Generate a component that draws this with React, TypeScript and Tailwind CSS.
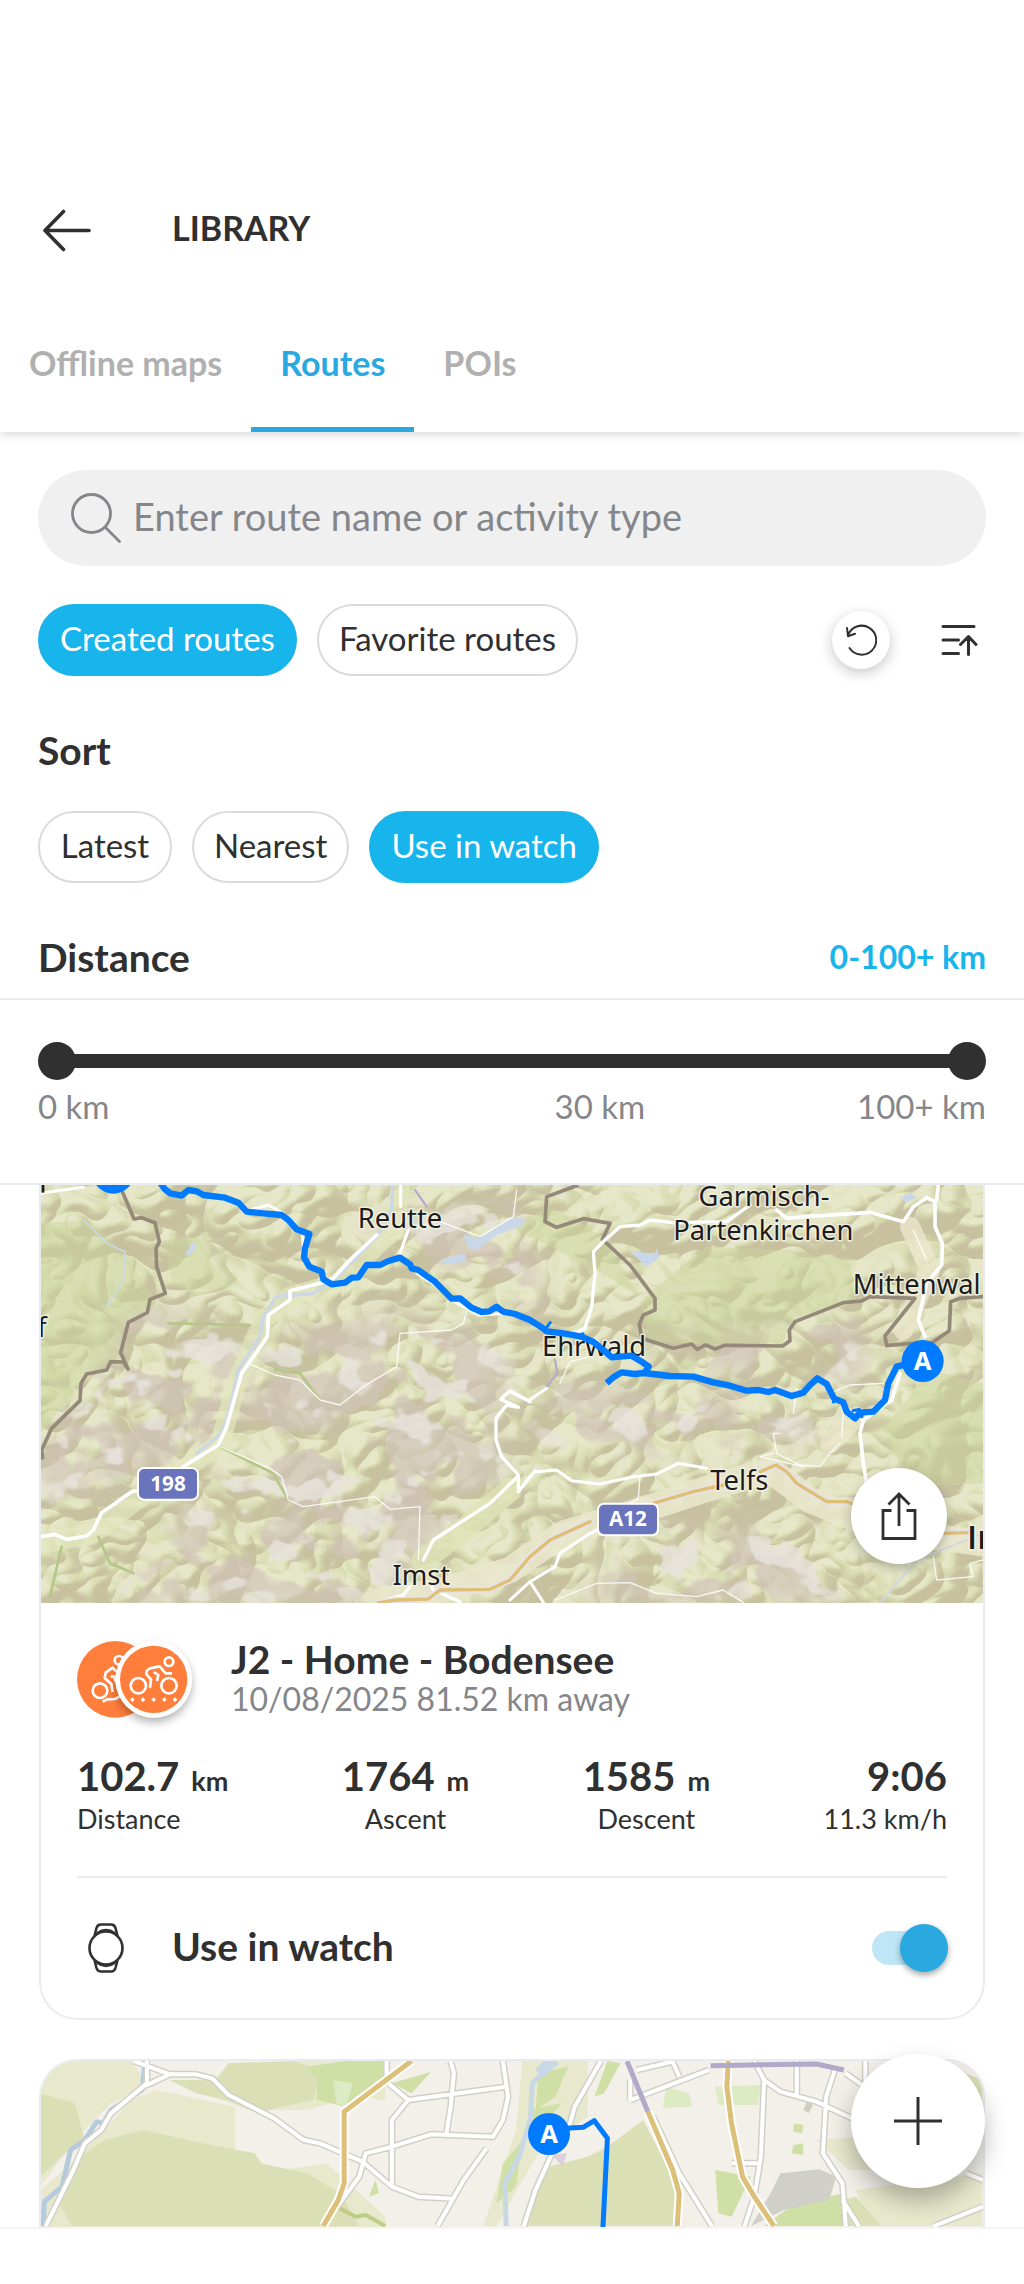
import React, { useState } from 'react';

const TABS = ['Offline maps', 'Routes', 'POIs'];
const SOURCES = ['Created routes', 'Favorite routes'];
const SORTS = ['Latest', 'Nearest', 'Use in watch'];

const STATS = [
  { value: '102.7', unit: 'km', label: 'Distance', align: 'text-left' },
  { value: '1764', unit: 'm', label: 'Ascent', align: 'text-center' },
  { value: '1585', unit: 'm', label: 'Descent', align: 'text-center' },
  { value: '9:06', unit: '', label: '11.3 km/h', align: 'text-right' },
];

interface ChipProps {
  label: string;
  active: boolean;
  onClick: () => void;
}

function Chip({ label, active, onClick }: ChipProps) {
  return (
    <button
      type="button"
      aria-pressed={active}
      onClick={onClick}
      className={`h-[72px] min-w-[134px] px-5 pb-1 rounded-full border-2 text-[33px] leading-10 whitespace-nowrap ${
        active ? 'bg-[#18b4ec] border-[#18b4ec] text-white' : 'bg-white border-[#d8dcdf] text-[#303030]'
      }`}
    >
      {label}
    </button>
  );
}

function Header() {
  const [tab, setTab] = useState('Routes');

  return (
    <header className="relative bg-white pt-[170px] shadow-[0_2px_10px_rgba(0,0,0,0.18)]">
      <div className="flex items-center h-[120px] pl-[42px]">
        <button type="button" aria-label="Back">
          <svg width="50" height="43" viewBox="0 0 50 43" fill="none" stroke="#303030" strokeWidth="3.600" strokeLinecap="round" strokeLinejoin="round">
            <path d="M47 21.500H3M21.500 2.500L3 21.500l18.500 19" />
          </svg>
        </button>
        <h1 className="ml-20 pb-1 text-[34px] leading-10 font-bold text-[#303030]">LIBRARY</h1>
      </div>
      <nav className="flex">
        {TABS.map((t) => (
          <button
            key={t}
            type="button"
            onClick={() => setTab(t)}
            className={`relative h-[142px] px-[29px] pt-1 text-[34px] leading-10 font-bold ${
              t === tab ? 'text-[#2aa9e0]' : 'text-[#b0b0b0]'
            }`}
          >
            {t}
            {t === tab && <span className="absolute inset-x-0 bottom-0 h-[5px] bg-[#2aa9e0]" />}
          </button>
        ))}
      </nav>
    </header>
  );
}

function DistanceSlider() {
  const [low, setLow] = useState(0);
  const [high, setHigh] = useState(100);
  const range =
    'absolute inset-0 w-full h-[38px] appearance-none bg-transparent pointer-events-none [&::-webkit-slider-thumb]:appearance-none [&::-webkit-slider-thumb]:pointer-events-auto [&::-webkit-slider-thumb]:size-[38px] [&::-webkit-slider-thumb]:rounded-full [&::-webkit-slider-thumb]:bg-[#303030]';

  return (
    <div className="border-y-2 border-[#e8ecef] px-[38px] pt-[42px] pb-[55px]">
      <div className="relative flex items-center h-[38px]">
        <div className="h-[14px] mx-4 flex-1 bg-[#303030]" />
        <input type="range" aria-label="Minimum distance" min={0} max={100} value={low} onChange={(e) => setLow(Math.min(+e.target.value, high))} className={range} />
        <input type="range" aria-label="Maximum distance" min={0} max={100} value={high} onChange={(e) => setHigh(Math.max(+e.target.value, low))} className={range} />
      </div>
      <div className="mt-1 flex text-[33px] leading-[44px] text-[#85868a]">
        <span>0 km</span>
        <span className="grow-[21]" />
        <span>30 km</span>
        <span className="grow-[10]" />
        <span>100+ km</span>
      </div>
    </div>
  );
}

function Marker({ x, y, r }: { x: number; y: number; r: number }) {
  return (
    <g>
      <circle cx={x} cy={y} r={r} fill="#007aff" />
      <text x={x} y={y + r * 0.42} textAnchor="middle" fontFamily="'Noto Sans', sans-serif" fontWeight="700" fontSize={r * 1.22} fill="#fff">
        A
      </text>
    </g>
  );
}

function Shield({ x, y, label }: { x: number; y: number; label: string }) {
  return (
    <g>
      <rect x={x} y={y} width="180" height="95" rx="18" fill="#6974bd" stroke="#fff" strokeWidth="6" />
      <text x={x + 90} y={y + 68} textAnchor="middle" fontFamily="'Open Sans', sans-serif" fontWeight="700" fontSize="62" fill="#fff">
        {label}
      </text>
    </g>
  );
}

function AlpsMap() {
  return (
    <svg className="block w-full h-[418px]" viewBox="33 45 2826 1254" preserveAspectRatio="xMidYMid slice" role="img" aria-label="Route map">
      <defs>
        <filter id="relief" x="0" y="0" width="100%" height="100%" colorInterpolationFilters="sRGB">
          <feTurbulence type="turbulence" baseFrequency="0.0032 0.0038" numOctaves="3" seed="14" />
          <feDiffuseLighting surfaceScale="120" diffuseConstant="1.05" lightingColor="#fff">
            <feDistantLight azimuth="235" elevation="55" />
          </feDiffuseLighting>
          <feComponentTransfer>
            <feFuncR type="discrete" tableValues=".77 .77 .77 .78 .79 .80 .82 .84 .86 .87 .89 .91" />
            <feFuncG type="discrete" tableValues=".74 .74 .74 .75 .77 .79 .82 .85 .87 .88 .90 .91" />
            <feFuncB type="discrete" tableValues=".62 .62 .62 .63 .65 .65 .67 .69 .71 .73 .77 .80" />
          </feComponentTransfer>
        </filter>
        <filter id="rock" x="0" y="0" width="100%" height="100%" colorInterpolationFilters="sRGB">
          <feTurbulence type="fractalNoise" baseFrequency="0.0055 0.0065" numOctaves="3" seed="5" />
          <feColorMatrix values="0 0 0 0 .82  0 0 0 0 .765  0 0 0 0 .72  16 0 0 0 -7.6" />
        </filter>
        <filter id="snow" x="0" y="0" width="100%" height="100%" colorInterpolationFilters="sRGB">
          <feTurbulence type="fractalNoise" baseFrequency="0.008 0.010" numOctaves="3" seed="31" />
          <feColorMatrix values="0 0 0 0 .91  0 0 0 0 .89  0 0 0 0 .87  0 14 0 0 -8.3" />
        </filter>
        <filter id="soft" x="-20%" y="-20%" width="140%" height="140%">
          <feGaussianBlur stdDeviation="35" />
        </filter>
        <mask id="peaks">
          <g fill="#fff" filter="url(#soft)">
            <path d="M300 400L650 480L620 640L560 830L300 930L33 1020V860L180 620Z" />
            <path d="M700 500L1100 420L1440 520V640L1380 760L1440 900L1180 1150L1050 1299H250L500 1000L620 860Z" />
            <path d="M980 150L1440 90L1560 440L1200 260Z" />
            <path d="M1580 640L2250 700L2420 800L1880 850L1480 820Z" />
            <path d="M1850 1100L2300 1060L2500 1299H1640Z" />
            <path d="M1850 500L2500 420V640L1900 590Z" />
          </g>
        </mask>
      </defs>
      <rect x="33" y="45" width="2826" height="1254" fill="#dcdeb2" />
      <rect x="33" y="45" width="2826" height="1254" filter="url(#relief)" opacity=".85" />
      <g mask="url(#peaks)">
        <rect x="33" y="45" width="2826" height="1254" filter="url(#rock)" opacity=".7" />
        <rect x="33" y="45" width="2826" height="1254" filter="url(#snow)" opacity=".8" />
      </g>

      {/* forests and valley floors */}
      <g fill="#cbd79b" opacity=".45">
        <path d="M33 160L180 150L290 260L380 400L290 450L260 560L150 640L33 790Z" />
        <path d="M400 210L500 200L560 300L600 350L540 360L430 350Z" />
        <path d="M1830 400L1880 350L2030 230L2280 240L2460 280L2480 400L2280 450L2260 520L1860 520Z" />
        <path d="M2560 780L2700 600L2859 640V940L2640 950Z" />
        <path d="M1440 170L1560 110L1720 200L1830 380L1700 300Z" />
      </g>
      <g fill="none" strokeLinecap="round" strokeLinejoin="round">
        <path d="M45 1120L190 1090L320 990L460 900L570 820L620 640L700 450L780 380L920 340L1090 180L1110 60" stroke="#e3e7bd" strokeWidth="60" opacity=".7" />
        <path d="M1060 1290L1240 1260L1440 1200L1600 1090L1900 1000L2050 950L2220 900L2340 990L2560 1080L2859 1120" stroke="#eae8cc" strokeWidth="78" opacity=".85" />
        <path d="M2640 170L2700 300L2620 480M2480 740L2400 820" stroke="#ebe6cb" strokeWidth="60" opacity=".8" />
        <path d="M1180 1170L1300 1080L1440 960" stroke="#dfe4b6" strokeWidth="70" opacity=".8" />
        <path d="M570 830L730 910L775 990M415 460L660 465M205 1100L240 1180L310 1210M735 600L810 610L870 690M60 1280L95 1130" stroke="#b5c787" strokeWidth="8" />
      </g>

      {/* water */}
      <g fill="none" stroke="#ccd8e3" strokeLinecap="round" strokeLinejoin="round">
        <path d="M1088 50L1085 120L1040 200L980 260L910 330L850 370L740 380L700 440L690 500L625 600L600 720L575 790L500 850" strokeWidth="11" />
        <path d="M160 150L230 220L285 245L280 330L230 410" strokeWidth="5" />
        <path d="M2860 1090L2660 1170L2550 1299" strokeWidth="5" />
        <path d="M1155 60L1190 110M1575 570L1582 610L1550 650" stroke="#b3adc8" strokeWidth="7" />
      </g>
      <g fill="#c9d7e8">
        <path d="M1300 195L1350 205L1440 145L1485 145L1480 165L1400 195L1340 240L1315 235Z" />
        <path d="M1230 270L1305 250L1310 275L1245 283Z" />
        <path d="M465 255L488 215L500 230L480 255Z" />
        <path d="M1800 245L1875 250L1880 235L1888 265L1850 290Z" />
        <path d="M2610 85L2640 68L2660 82L2630 97Z" />
      </g>

      {/* national border */}
      <g fill="none" stroke="#95897a" strokeWidth="11" strokeLinejoin="round">
        <path d="M275 60L312 147L335 143L375 158L388 215L378 235L380 290L406 370L360 388L352 428L295 457L272 548L294 597L280 576L242 575L230 600L170 612L153 640L150 692L65 775L35 840L38 868" />
        <path d="M1645 45L1550 80L1545 155L1580 172L1660 146L1740 160L1717 208L1800 285L1875 385V420L1840 435L1828 462L1835 505L1930 535L1985 522L2002 538L2026 525L2055 537L2085 526L2258 528L2280 512L2278 480L2295 455L2440 398L2495 393L2520 380L2655 385L2565 498L2570 527L2640 520L2700 523L2758 482L2762 395L2790 385L2859 380" />
      </g>

      {/* roads */}
      <g fill="none" stroke="#fff" strokeLinecap="round" strokeLinejoin="round">
        <path d="M33 1100L75 1093L110 1108L170 1098L190 1080L215 1028L305 965L330 960M460 890L565 825L590 770L615 680L635 610L712 500L715 435L780 390V362L870 340L910 325L960 270L1040 195" strokeWidth="11" />
        <path d="M33 70L120 57L160 52M1112 45V110M1135 180L1110 250M1160 310L1215 345L1265 390L1345 435L1440 430M640 125L715 105L760 130M818 190L820 250" strokeWidth="9" />
        <path d="M1500 695L1440 662L1412 688L1465 712L1430 705L1398 745V810L1415 860L1465 915V965L1500 920L1517 902M1465 918L1380 1000L1210 1110L1180 1170M1195 1235L1210 1260L1290 1295M1140 1250L1120 1275L1045 1297" strokeWidth="10" />
        <path d="M1440 665L1495 692L1550 655M1517 905L1580 900L1625 932L1710 942L1810 920L1880 912L1945 880L2030 895M1860 1010L1680 1090L1590 1150L1575 1190L1500 1235L1440 1290M1500 1235L1540 1297" strokeWidth="9" />
        <path d="M2160 105L2090 155L1930 158L1860 150L1830 165L1770 170L1725 210L1690 245L1695 310L1685 410L1665 475L1635 490" strokeWidth="10" />
        <path d="M2240 120L2270 145L2330 140L2520 127L2620 155L2650 110L2690 83L2715 95V170L2737 220L2735 285L2690 340L2665 450L2685 500M2725 45L2720 90M2610 610L2585 690L2500 750L2490 790L2500 880L2510 940" strokeWidth="11" />
        <path d="M1310 425L1300 460L1265 480L1110 490L1100 590L1000 650L930 705L870 690L810 630L735 615L655 580M570 830L720 895L755 920L775 990L820 1010L1035 980L1080 1018L1170 1010L1165 1170M1590 640L1620 575L1680 560M2430 820L2400 850L2370 890L2310 885L2240 850L2230 790L2250 790M2440 720L2435 800M2230 850L2190 860L2320 890M2300 655L2290 730M2400 670L2460 645L2560 640M2650 180L2690 270M1460 60L1450 140L1350 200L1230 155M1575 1290L1700 1240L1800 1238L1880 1270L2000 1280L2080 1260L2140 1297M1830 920L1825 985L1800 1000M2859 1170L2820 1180L2830 1220L2720 1230L2710 1160" strokeWidth="4" opacity=".85" />
        <path d="M1045 1299L1100 1290L1195 1287L1230 1260L1380 1258L1440 1230L1500 1160L1560 1110L1680 1055M1870 1000L1990 965L2080 945M2190 905L2238 885L2270 905L2300 940L2390 995H2450L2490 1010M2730 1090L2820 1088" stroke="#e6e2e6" strokeWidth="20" />
        <path d="M1045 1299L1100 1290L1195 1287L1230 1260L1380 1258L1440 1230L1500 1160L1560 1110L1680 1055M1870 1000L1990 965L2080 945M2190 905L2238 885L2270 905L2300 940L2390 995H2450L2490 1010M2730 1090L2820 1088" stroke="#dfbf74" strokeWidth="10" />
      </g>

      <g fontFamily="'Noto Sans', sans-serif" fontSize="82" fill="#1c1c1c" stroke="#f4f3e6" strokeWidth="9" strokeOpacity=".85" strokeLinejoin="round" paintOrder="stroke" textAnchor="middle">
        <text x="1110" y="173">Reutte</text>
        <text x="2202" y="108">Garmisch-</text>
        <text x="2200" y="211">Partenkirchen</text>
        <text x="2660" y="371">Mittenwal</text>
        <text x="1692" y="559">Ehrwald</text>
        <text x="2128" y="961">Telfs</text>
        <text x="1174" y="1244">Imst</text>
        <text x="36" y="502">f</text>
        <text x="2811" y="1137" textAnchor="start" fontFamily="'Open Sans', sans-serif" fontWeight="600" fontSize="100">Inn</text>
      </g>
      <path d="M39 45V68" stroke="#1c1c1c" strokeWidth="8" />
      <Shield x={324} y={894} label="198" />
      <Shield x={1704} y={1001} label="A12" />

      <g fill="none" stroke="#007aff" strokeWidth="19" strokeLinejoin="round">
        <path d="M392 40L405 58L420 70L455 77L475 60L500 64L520 75L585 83L625 98L650 125L700 130L755 135L775 150L800 178L838 192L825 235L822 262L838 290L875 305L880 328L905 343L945 338L965 323L985 322L1010 285L1050 285L1075 273L1110 263L1140 283L1145 295L1165 300L1190 318L1215 335L1265 386L1290 385L1325 413L1355 426L1378 424L1400 410L1420 425L1455 432L1500 450L1535 472L1550 484L1600 490L1655 500L1690 516L1720 540L1745 562L1805 557L1835 575L1856 590L1842 611" />
        <path d="M1730 639L1750 622L1775 607L1815 612L1842 609L1920 618L1990 620L2050 637L2100 647L2150 662L2185 660L2215 666L2235 660L2285 678L2320 668L2340 645L2362 625L2390 642L2412 685L2440 697L2450 725L2475 745L2490 728L2530 725L2565 690L2575 640L2600 590L2640 580" />
        <path d="M1545 478L1563 455M1655 500L1660 488M2412 685L2410 700M2475 735L2500 740M2466 722L2492 718" strokeWidth="9" />
      </g>
      <Marker x={250} y={8} r={63} />
      <Marker x={2678} y={573} r={63} />
    </svg>
  );
}

const CITY_STREETS =
  'M205 93L260 133H300L325 145L350 195L420 265L465 330L490 340L555 395L600 470L640 500L695 506M225 93V165L260 133M225 160L170 250L155 300L130 340L110 430L70 588M592 93V155L625 210L775 170M625 210L600 270V470M690 93L695 130L690 230L683 318M770 93L778 200L770 270L755 320L660 313L600 350L560 370L550 440L520 520M745 355L710 450L670 588M920 93L880 230L870 300M850 350L820 480L802 588M965 210L1085 120M975 120L1030 95L1040 140M965 210V150M1155 93L1170 150L1165 380L1155 500L1140 588M1170 150L1195 185L1250 215L1305 265M1220 93V195M1280 110L1265 200L1260 370L1290 460L1295 588M1295 130L1320 165M1290 510L1315 588M1000 260L1040 430L1090 588M1325 93V160M1430 588L1505 530M1480 430L1505 450M1120 400H1160';

function CityMap() {
  return (
    <svg className="block w-full h-[166px]" viewBox="0 0 942 166" preserveAspectRatio="xMidYMin slice" role="img" aria-label="Route map">
      <rect width="942" height="166" fill="#f2f0e9" />
      <g transform="translate(-41 -31) scale(.6531 .3334)" className="[&_path]:[vector-effect:non-scaling-stroke]">
        <g fill="#e8e8cd">
          <path d="M62 93H200L230 170L170 220L110 340L62 470Z" />
          <path d="M240 180L360 230V440L500 400L590 560V595H62V480L110 400L160 300L200 210Z" />
          <path d="M460 93H590V210L540 200L470 240L380 240L300 180L350 120Z" />
          <path d="M800 93H900V260L830 350L760 588H740L790 300Z" />
          <path d="M1250 330L1320 320L1340 420L1300 420ZM1310 480L1504 430V588H1330Z" />
        </g>
        <g fill="#dadfb5">
          <path d="M62 190L115 220L130 330L100 370L62 440Z" />
          <path d="M110 400L160 330L220 300L310 340L390 370L400 400L470 430L520 490L550 588H110L90 520Z" />
          <path d="M260 150H330L350 100L450 93L490 120L480 210L400 245L345 210L300 190Z" />
          <path d="M930 350L985 270L1040 480V588H800L840 410L900 380Z" />
          <path d="M1200 550L1310 500L1350 588H1180ZM1440 100L1504 150V260L1440 180Z" />
        </g>
        <g fill="#cfdfa6">
          <path d="M470 110L530 93H590V150L545 200L530 230L485 210V150ZM600 160L660 125L630 190Z" />
          <path d="M825 130L870 110L850 200L820 240ZM810 240L860 220L830 290L808 280ZM1095 420L1150 440L1120 560L1100 550ZM1170 588L1210 530L1290 490L1295 588Z" />
          <path d="M770 400L800 330L790 470L760 520ZM1215 280L1230 285L1228 310L1215 305ZM1215 345L1230 340V375L1212 370ZM930 93L950 100L925 190L910 200ZM575 450L580 490L565 500Z" />
        </g>
        <g fill="#dcebc4">
          <path d="M1020 170L1055 190L1060 230L1015 235ZM1095 170L1165 165L1160 225H1100ZM510 150L540 160L530 230L515 220Z" />
        </g>
        <path d="M1195 430L1255 418L1280 440L1270 510L1200 540L1150 588L1180 490Z" fill="#d0d0c8" />
        <path d="M845 375L868 370L862 410Z" fill="#dfcddb" />
        <path d="M1235 215L1245 225L1238 250L1230 240Z" fill="#cdcfc3" />
        <g fill="none" strokeLinecap="butt" strokeLinejoin="round">
          <path d="M222 93L218 180L170 240L158 280L148 275L130 330L108 360L95 470L68 515L66 588" stroke="#b5cbdd" strokeWidth="5" />
          <path d="M842 88L830 130L815 160L812 270L795 380L773 460L775 588" stroke="#c8d8e5" strokeWidth="5" />
          <path d="M850 88L825 130" stroke="#c8d8e5" strokeWidth="12" />
          <path d="M520 535L545 560L560 555L590 588" stroke="#bfcd88" strokeWidth="4" />
          <path d={CITY_STREETS} stroke="#d2d0c6" strokeWidth="7" />
          <path d={CITY_STREETS} stroke="#fff" strokeWidth="4" />
          <path d="M630 93L527 245V460L518 510L495 588M1115 93L1113 170L1120 280L1137 440L1155 500L1185 588M992 245L1030 420L1040 490L1037 588" stroke="#fff" strokeWidth="9" />
          <path d="M630 93L527 245V460L518 510L495 588M1115 93L1113 170L1120 280L1137 440L1155 500L1185 588M992 245L1030 420L1040 490L1037 588" stroke="#dcbf78" strokeWidth="5" />
          <path d="M960 93L992 245" stroke="#b0a9c8" strokeWidth="5" />
          <path d="M1088 107L1250 102L1292 120" stroke="#b0a9c8" strokeWidth="5" />
          <path d="M865 295L893 292L910 272L930 325L923 600" stroke="#007aff" strokeWidth="5" />
        </g>
      </g>
      <Marker x={508} y={73} r={21} />
    </svg>
  );
}

function ActivityIcons() {
  return (
    <svg className="overflow-visible shrink-0" width="116" height="77" viewBox="51 63 348 231" role="img" aria-label="Cycling">
      <defs>
        <filter id="badge" x="-30%" y="-30%" width="160%" height="170%">
          <feDropShadow dx="0" dy="14" stdDeviation="12" floodOpacity=".3" />
        </filter>
      </defs>
      <circle cx="166" cy="178" r="115" fill="#ff7e3b" />
      <g fill="none" stroke="#fff" strokeWidth="8" strokeLinejoin="round">
        <circle cx="120" cy="212" r="22" />
        <circle cx="177" cy="121" r="13" />
        <path d="M168 154L158 143L137 158L134 174L154 192L158 216M152 170H170M158 166L172 192" />
        <path d="M128 245L142 238L165 237L182 228" />
      </g>
      <circle cx="281" cy="178" r="115" fill="#fff" filter="url(#badge)" />
      <circle cx="281" cy="178" r="101" fill="#ff7e3b" />
      <g fill="none" stroke="#fff" strokeWidth="8" strokeLinejoin="round">
        <circle cx="235" cy="197" r="23" />
        <circle cx="327" cy="197" r="23" />
        <circle cx="327" cy="125" r="13" />
        <path d="M336 160H317L299 139L270 145Q255 152 260 164L273 178L270 204M281 156L295 165L291 183" />
      </g>
      <path d="M217 232l7 7-7 7-7-7zM249 232l7 7-7 7-7-7zM281 232l7 7-7 7-7-7zM313 232l7 7-7 7-7-7zM345 232l7 7-7 7-7-7z" fill="#fff" />
    </svg>
  );
}

function RouteCard() {
  const [inWatch, setInWatch] = useState(true);

  return (
    <article className="border-2 border-t-0 border-[#e8ecef] rounded-b-[38px] bg-white">
      <div className="relative">
        <AlpsMap />
        <button type="button" aria-label="Share route" className="absolute right-9 bottom-[39px] size-24 rounded-full bg-white flex items-center justify-center shadow-[0_4px_12px_rgba(0,0,0,0.25)]">
          <svg width="36" height="48" viewBox="0 0 36 48" fill="none" stroke="#303030" strokeWidth="2.800">
            <path d="M10.500 18.500H2V46.500H34V18.500H25.500M18 34V2M7.500 12.500L18 2L28.500 12.500" />
          </svg>
        </button>
      </div>
      <div className="px-9 pt-9">
        <div className="flex items-center gap-[38px]">
          <ActivityIcons />
          <div>
            <h2 className="text-[39px] leading-10 font-bold text-[#303030]">J2 - Home - Bodensee</h2>
            <p className="text-[32px] leading-10 text-[#85868a]">10/08/2025 81.52 km away</p>
          </div>
        </div>
        <dl className="mt-8 flex justify-between text-[#303030]">
          {STATS.map((s) => (
            <div key={s.label} className={`flex flex-col-reverse ${s.align}`}>
              <dt className="text-[27px] leading-9">{s.label}</dt>
              <dd className="text-[40px] leading-[50px] font-bold">
                {s.value}
                {s.unit && <span className="ml-3 text-[27px] leading-none">{s.unit}</span>}
              </dd>
            </div>
          ))}
        </dl>
        <label className="mt-[39px] flex items-center h-[142px] border-t-2 border-[#e8ecef]">
          <svg className="ml-[11px]" width="36" height="50" viewBox="0 0 36 50" fill="none" stroke="#303030" strokeWidth="2.600">
            <circle cx="18" cy="25" r="16.500" />
            <path d="M6.500 13L8.500 5Q9.500 1.500 13 1.500H23Q26.500 1.500 27.500 5L29.500 13M6.500 37L8.500 45Q9.500 48.500 13 48.500H23Q26.500 48.500 27.500 45L29.500 37" />
            <path d="M9 10Q18 3.500 27 10M9 40Q18 46.500 27 40" strokeWidth="2" />
          </svg>
          <span className="ml-12 pb-1 text-[39px] leading-10 font-bold text-[#303030]">Use in watch</span>
          <input
            type="checkbox"
            role="switch"
            checked={inWatch}
            onChange={(e) => setInWatch(e.target.checked)}
            className="relative ml-auto appearance-none w-[75px] h-[34px] rounded-full bg-gray-300 checked:bg-[#bfe6f6] before:absolute before:-top-[7px] before:left-0 checked:before:left-[28px] before:size-12 before:rounded-full before:bg-gray-100 checked:before:bg-[#2aa9e0] before:shadow-[0_3px_6px_rgba(0,0,0,0.35)]"
          />
        </label>
      </div>
    </article>
  );
}

export default function App() {
  const [source, setSource] = useState('Created routes');
  const [sort, setSort] = useState('Use in watch');

  return (
    <div className="relative min-h-screen flex flex-col bg-white font-['Lato',sans-serif] text-[#303030]">
      <Header />
      <main className="flex-1 pt-[38px]">
        <div className="px-[38px]">
          <label className="flex items-center h-24 rounded-full bg-[#f0f0f0] pl-[33px] pr-8">
            <svg className="shrink-0" width="50" height="50" viewBox="0 0 50 50" fill="none" stroke="#85868a" strokeWidth="2.800" strokeLinecap="round">
              <circle cx="20.500" cy="20.500" r="19" />
              <path d="M34.500 34.500L48.500 48.500" />
            </svg>
            <input
              type="text"
              aria-label="Search routes"
              placeholder="Enter route name or activity type"
              className="ml-3 pb-1 flex-1 min-w-0 bg-transparent outline-none text-[38px] leading-[48px] placeholder:text-[#85868a]"
            />
          </label>

          <div className="mt-[38px] flex items-center">
            <div className="flex gap-5">
              {SOURCES.map((s) => (
                <Chip key={s} label={s} active={s === source} onClick={() => setSource(s)} />
              ))}
            </div>
            <button type="button" aria-label="Reset filters" className="ml-auto size-[58px] rounded-full bg-white flex items-center justify-center shadow-[0_4px_14px_rgba(0,0,0,0.22)]">
              <svg width="32" height="32" viewBox="0 0 32 32" fill="none" stroke="#303030" strokeWidth="2" strokeLinecap="round" strokeLinejoin="round">
                <path d="M4.500 24A14.500 14.500 0 1 0 3 11.500M2 4L3 12.200L10 9.800" />
              </svg>
            </button>
            <button type="button" aria-label="Hide filters" className="ml-[50px] mr-2">
              <svg width="38" height="34" viewBox="0 0 38 34" fill="none" stroke="#303030" strokeWidth="3" strokeLinecap="round" strokeLinejoin="round">
                <path d="M3 3.500H34M3 17H18.500M3 30.500H18.500M28.500 31.500V14M20.500 21.500L28.500 13.500L36 21.500" />
              </svg>
            </button>
          </div>

          <h2 className="mt-[50px] text-[39px] leading-[48px] font-bold">Sort</h2>
          <div className="mt-[37px] flex gap-5">
            {SORTS.map((s) => (
              <Chip key={s} label={s} active={s === sort} onClick={() => setSort(s)} />
            ))}
          </div>

          <div className="mt-[50px] pb-[17px] flex items-center justify-between leading-[48px] font-bold">
            <h2 className="text-[39px]">Distance</h2>
            <span className="text-[32px] text-[#18b4ec]">0-100+ km</span>
          </div>
        </div>

        <DistanceSlider />

        <div className="px-[39px]">
          <RouteCard />
          <article className="mt-[39px] border-2 border-b-0 border-[#e8ecef] rounded-t-[38px] overflow-hidden">
            <CityMap />
          </article>
        </div>
      </main>
      <div className="h-[58px] border-t-2 border-[#f5f5f5] bg-white" />
      <button type="button" aria-label="Add route" className="absolute right-[39px] bottom-[97px] size-[134px] rounded-full bg-white flex items-center justify-center shadow-[0_12px_24px_rgba(0,0,0,0.28)]">
        <svg width="50" height="50" viewBox="0 0 50 50" stroke="#303030" strokeWidth="3">
          <path d="M25 1V49M1 25H49" />
        </svg>
      </button>
    </div>
  );
}
